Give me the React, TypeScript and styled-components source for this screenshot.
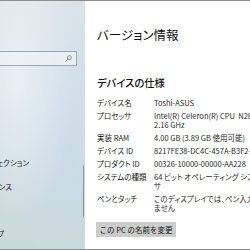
import React from "react";
import styled, { createGlobalStyle } from "styled-components";

const Global = createGlobalStyle`
  html, body { margin: 0; padding: 0; overflow: hidden; background: #fff; }
  body {
    font-family: "Noto Sans CJK JP", "Noto Sans", sans-serif;
    font-feature-settings: "palt";
  }
`;

const Window = styled.div`
  width: 250px;
  height: 250px;
  box-sizing: border-box;
  border-top: 1px solid #8e8e8e;
  border-bottom: 1px solid #8e8e8e;
  display: grid;
  grid-template-columns: 85px 1fr;
  overflow: hidden;
`;

const Sidebar = styled.aside`
  position: relative;
  display: flex;
  flex-direction: column;
  padding-top: 50px;
  background:
    radial-gradient(ellipse at 20% 30%, rgba(240, 245, 250, 0.7), rgba(240, 245, 250, 0) 60%),
    radial-gradient(ellipse at 80% 60%, rgba(200, 218, 232, 0.6), rgba(200, 218, 232, 0) 60%),
    linear-gradient(180deg, #dbe3ea 0%, #d4dfe7 45%, #cddbe0 75%, #c9d9db 100%);
  overflow: hidden;
`;

const Search = styled.div`
  width: 77px;
  height: 15px;
  box-sizing: border-box;
  border: 1px solid #9aa6b1;
  border-left: none;
  background: rgba(236, 241, 246, 0.85);
  display: flex;
  align-items: center;
  justify-content: flex-end;
  padding-right: 4px;
`;

const Nav = styled.nav`
  display: flex;
  flex-direction: column;
  margin-top: 85px;
`;

const NavItem = styled.div<{ $end: number }>`
  width: ${(p) => p.$end}px;
  height: 23.5px;
  display: flex;
  align-items: center;
  justify-content: flex-end;
  overflow: hidden;
  white-space: nowrap;
  font-size: 7.5px;
  color: #1a1a1a;
`;

const ScrollThumb = styled.div`
  position: absolute;
  right: 1px;
  top: 164px;
  width: 1.5px;
  height: 52px;
  background: #8e959b;
`;

const Content = styled.main`
  display: flex;
  flex-direction: column;
  padding: 24px 0 0 12px;
  min-width: 0;
`;

const Title = styled.h1`
  margin: 0;
  font-size: 12.5px;
  line-height: 20px;
  font-weight: 400;
  color: #111;
  white-space: nowrap;
`;

const Heading = styled.h2`
  margin: 31px 0 0;
  font-size: 10.3px;
  line-height: 14px;
  font-weight: 500;
  color: #111;
  white-space: nowrap;
`;

const Specs = styled.dl`
  margin: 8px 0 0;
  display: grid;
  grid-template-columns: 57px max-content;
  row-gap: 4px;
  font-size: 7.5px;
  line-height: 9px;
`;

const Label = styled.dt`
  margin: 0;
  color: #1a1a1a;
  white-space: nowrap;
`;

const Value = styled.dd`
  margin: 0;
  color: #2a2a2a;
  white-space: pre;
`;

const RenameButton = styled.button`
  margin-top: 10px;
  margin-left: -1px;
  align-self: flex-start;
  width: 80px;
  height: 15px;
  border: none;
  background: #cccccc;
  font-family: inherit;
  font-size: 7.5px;
  color: #111;
  padding: 0;
  white-space: nowrap;
`;

const SearchIcon = () => (
  <svg width="7" height="7" viewBox="0 0 16 16" fill="none" stroke="#6b6f74" strokeWidth="1.6">
    <circle cx="10" cy="6" r="4.5" />
    <path d="M6.8 9.2 L1.5 14.5" strokeLinecap="round" />
  </svg>
);

const navItems = [
  { text: "この PC へのプロジェクション", end: 29 },
  { text: "共有エクスペリエンス", end: 12 },
  { text: "クリップボード", end: 0 },
  { text: "リモート デスクトップ", end: 4 },
];

const specs: { label: string; value: string }[] = [
  { label: "デバイス名", value: "Toshi-ASUS" },
  { label: "プロセッサ", value: "Intel(R) Celeron(R) CPU  N2830 @\n2.16 GHz" },
  { label: "実装 RAM", value: "4.00 GB (3.89 GB 使用可能)" },
  { label: "デバイス ID", value: "8217FE38-DC4C-457A-B3F2-8C1D5E6A9B20" },
  { label: "プロダクト ID", value: "00326-10000-00000-AA228" },
  { label: "システムの種類", value: "64 ビット オペレーティング システム、x64 ベース プロセッ\nサ" },
  { label: "ペンとタッチ", value: "このディスプレイでは、ペン入力とタッチ入力を利用でき\nません" },
];

export default function App() {
  return (
    <>
      <Global />
      <Window>
        <Sidebar>
          <Search>
            <SearchIcon />
          </Search>
          <Nav>
            {navItems.map((n) => (
              <NavItem key={n.text} $end={n.end}>
                {n.text}
              </NavItem>
            ))}
          </Nav>
          <ScrollThumb />
        </Sidebar>
        <Content>
          <Title>バージョン情報</Title>
          <Heading>デバイスの仕様</Heading>
          <Specs>
            {specs.map((s) => (
              <React.Fragment key={s.label}>
                <Label>{s.label}</Label>
                <Value>{s.value}</Value>
              </React.Fragment>
            ))}
          </Specs>
          <RenameButton>この PC の名前を変更</RenameButton>
        </Content>
      </Window>
    </>
  );
}
